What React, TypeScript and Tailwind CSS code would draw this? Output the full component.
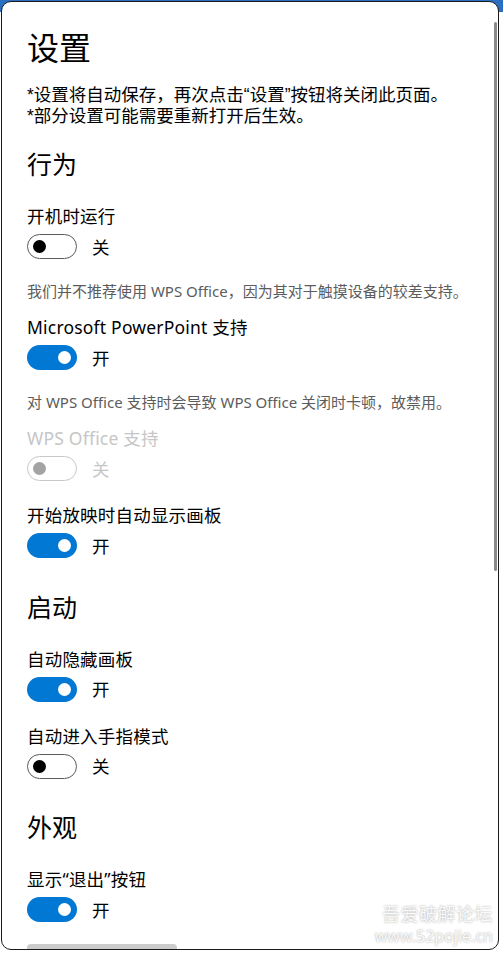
import React from 'react'

interface Setting {
  label: string
  on: boolean
  note?: string
  disabled?: boolean
}

interface Section {
  title: string
  items: Setting[]
}

const sections: Section[] = [
  {
    title: '行为',
    items: [
      { label: '开机时运行', on: false },
      {
        label: 'Microsoft PowerPoint 支持',
        on: true,
        note: '我们并不推荐使用 WPS Office，因为其对于触摸设备的较差支持。'
      },
      {
        label: 'WPS Office 支持',
        on: false,
        disabled: true,
        note: '对 WPS Office 支持时会导致 WPS Office 关闭时卡顿，故禁用。'
      },
      { label: '开始放映时自动显示画板', on: true }
    ]
  },
  {
    title: '启动',
    items: [
      { label: '自动隐藏画板', on: true },
      { label: '自动进入手指模式', on: false }
    ]
  },
  {
    title: '外观',
    items: [{ label: '显示“退出”按钮', on: true }]
  }
]

function Toggle({ on, disabled }: { on: boolean; disabled?: boolean }) {
  if (on) {
    return (
      <span className="flex h-[25px] w-[50px] items-center justify-end rounded-full bg-[#0078d4] pr-[6px]">
        <span className="h-[13px] w-[13px] rounded-full bg-white" />
      </span>
    )
  }
  return (
    <span
      className={
        disabled
          ? 'flex h-[25px] w-[50px] items-center rounded-full border-[1.5px] border-[#c8c8c8] pl-[5px]'
          : 'flex h-[25px] w-[50px] items-center rounded-full border-[1.5px] border-[#5a5a5a] pl-[5px]'
      }
    >
      <span className={disabled ? 'h-[13px] w-[13px] rounded-full bg-[#a3a3a3]' : 'h-[13px] w-[13px] rounded-full bg-black'} />
    </span>
  )
}

function SettingRow({ item }: { item: Setting }) {
  return (
    <div className="flex flex-col">
      {item.note && (
        <p className="mb-[14px] text-[15px] leading-[20px] text-[#5c5c5c]">{item.note}</p>
      )}
      <div className={item.disabled ? 'text-[17.5px] leading-[24px] tracking-[0.2px] text-[#c6c6c6]' : 'text-[17.5px] leading-[24px] tracking-[0.2px] text-black'}>
        {item.label}
      </div>
      <div className="mt-[6px] flex items-center gap-[15px]">
        <Toggle on={item.on} disabled={item.disabled} />
        <span className={item.disabled ? 'text-[17.5px] leading-[24px] text-[#c6c6c6]' : 'text-[17.5px] leading-[24px] text-black'}>
          {item.on ? '开' : '关'}
        </span>
      </div>
    </div>
  )
}

export default function App() {
  return (
    <div className="relative h-[953px] w-[503px] overflow-hidden bg-white font-['Noto_Sans','Noto_Sans_CJK_SC',sans-serif]">
      {/* desktop behind the window */}
      <div className="absolute left-0 top-0 h-[12px] w-full bg-[#2a6fc2]" />

      <div className="relative ml-[1px] mt-[1px] h-[949px] w-[498px] overflow-hidden rounded-[10px] border border-[#1a1a1a] bg-white">
        <div className="flex flex-col pl-[25px] pr-[20px] pt-[24px]">
          <h1 className="text-[32px] leading-[44px] text-black">设置</h1>
          <div className="mt-[14.5px] font-['Liberation_Sans','Noto_Sans_CJK_SC',sans-serif] text-[17.5px] leading-[21px] text-black">
            <p>*设置将自动保存，再次点击“设置”按钮将关闭此页面。</p>
            <p>*部分设置可能需要重新打开后生效。</p>
          </div>

          {sections.map((section, si) => (
            <div key={section.title} className={si === 0 ? 'mt-[20.5px] flex flex-col' : 'mt-[31.5px] flex flex-col'}>
              <h2 className="text-[25px] leading-[34px] text-black">{section.title}</h2>
              <div className="mt-[23px] flex flex-col gap-[22px]">
                {section.items.map(item => (
                  <SettingRow key={item.label} item={item} />
                ))}
              </div>
            </div>
          ))}

          <button className="mt-[22px] h-[32px] w-[150px] rounded-[4px] bg-[#cccccc]" />
        </div>

        {/* scrollbar */}
        <div className="absolute right-[1px] top-[20px] h-[549px] w-[3px] rounded-full bg-[#8a8a8a]" />
      </div>

      {/* forum watermark */}
      <div className="absolute bottom-[7px] right-[10px] flex flex-col items-end text-white/90 [text-shadow:0_0_2px_rgba(0,0,0,0.4)]">
        <span className="text-[18px] leading-[23px] tracking-[0.5px]">吾爱破解论坛</span>
        <span className="text-[16px] leading-[20px]">www.52pojie.cn</span>
      </div>
    </div>
  )
}
